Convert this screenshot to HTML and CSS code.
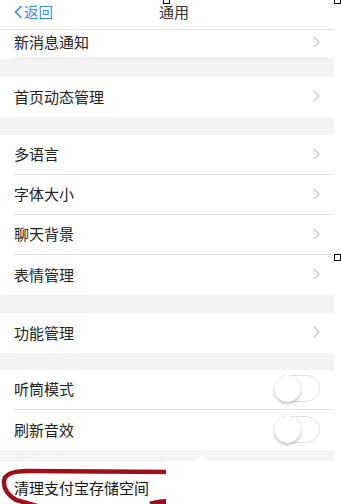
FILE: index.html
```html
<!DOCTYPE html>
<html lang="zh">
<head>
<meta charset="utf-8">
<link rel="stylesheet" href="styles.css">
</head>
<body>
<div class="page">
  <div class="screen">
    <header class="nav">
      <div class="back">
        <svg class="back-icon" width="9" height="14" viewBox="0 0 9 14"><polyline points="7.5,1 1.5,7 7.5,13" fill="none" stroke="#3b8ee0" stroke-width="1.6"/></svg>
        <span>返回</span>
      </div>
      <div class="title">通用</div>
      <div class="nav-spacer"></div>
    </header>

    <section class="group">
      <div class="row row-partial"><div class="row-inner"><span class="label">新消息通知</span><svg class="chev" width="7" height="12" viewBox="0 0 7 12"><polyline points="1,1 6,6 1,11" fill="none" stroke="#c7c7cc" stroke-width="1.2"/></svg></div></div>
    </section>

    <section class="group g2">
      <div class="row"><div class="row-inner"><span class="label">首页动态管理</span><svg class="chev" width="7" height="12" viewBox="0 0 7 12"><polyline points="1,1 6,6 1,11" fill="none" stroke="#c7c7cc" stroke-width="1.2"/></svg></div></div>
    </section>

    <section class="group g3">
      <div class="row"><div class="row-inner"><span class="label">多语言</span><svg class="chev" width="7" height="12" viewBox="0 0 7 12"><polyline points="1,1 6,6 1,11" fill="none" stroke="#c7c7cc" stroke-width="1.2"/></svg></div></div>
      <div class="row"><div class="row-inner"><span class="label">字体大小</span><svg class="chev" width="7" height="12" viewBox="0 0 7 12"><polyline points="1,1 6,6 1,11" fill="none" stroke="#c7c7cc" stroke-width="1.2"/></svg></div></div>
      <div class="row"><div class="row-inner"><span class="label">聊天背景</span><svg class="chev" width="7" height="12" viewBox="0 0 7 12"><polyline points="1,1 6,6 1,11" fill="none" stroke="#c7c7cc" stroke-width="1.2"/></svg></div></div>
      <div class="row"><div class="row-inner"><span class="label">表情管理</span><svg class="chev" width="7" height="12" viewBox="0 0 7 12"><polyline points="1,1 6,6 1,11" fill="none" stroke="#c7c7cc" stroke-width="1.2"/></svg></div></div>
    </section>

    <section class="group g4">
      <div class="row"><div class="row-inner"><span class="label">功能管理</span><svg class="chev" width="7" height="12" viewBox="0 0 7 12"><polyline points="1,1 6,6 1,11" fill="none" stroke="#c7c7cc" stroke-width="1.2"/></svg></div></div>
    </section>

    <section class="group g5">
      <div class="row"><div class="row-inner"><span class="label">听筒模式</span><span class="toggle"><span class="knob"></span></span></div></div>
      <div class="row"><div class="row-inner"><span class="label">刷新音效</span><span class="toggle"><span class="knob"></span></span></div></div>
    </section>

    <section class="group g6">
      <div class="row row-clean"><div class="row-inner"><span class="label">清理支付宝存储空间</span></div></div>
      <svg class="annot" width="180" height="44" viewBox="0 0 180 44"><path d="M172 10 L28 9 Q5 9 4 19 Q3 30 16 38 L44 46" fill="none" stroke="#9e0f1a" stroke-width="4.5" stroke-linecap="round"/><path d="M150 42 Q165 38 178 40" fill="none" stroke="#9e0f1a" stroke-width="5"/></svg>
      <div class="popup"><span class="popup-tip"></span></div>
    </section>
  </div>
  <span class="handle h1"></span>
  <span class="handle h2"></span>
  <span class="handle h3"></span>
</div>
</body>
</html>
```

FILE: styles.css
```css
* { box-sizing: border-box; }
html, body { margin: 0; padding: 0; background: #fff; }
body {
  font-family: "Noto Sans CJK SC", "Noto Sans", sans-serif;
  width: 341px;
  height: 504px;
  overflow: hidden;
}
.page { position: relative; width: 341px; height: 504px; overflow: hidden; }
.screen {
  width: 334px;
  height: 504px;
  background: #f4f4f7;
  overflow: hidden;
}
.nav {
  height: 30px;
  background: #fff;
  border-bottom: 1px solid #e4e4e6;
  display: flex;
  align-items: center;
  padding: 0 0 6px 14px;
}
.back {
  display: flex;
  align-items: center;
  gap: 1px;
  color: #3b8ee0;
  font-size: 14.5px;
  width: 80px;
}
.back-icon { display: block; }
.title {
  flex: 1;
  text-align: center;
  font-size: 15px;
  color: #333;
  padding-right: 80px;
}
.nav-spacer { width: 0; }
.group { background: #fff; }
.g2 { margin-top: 18px; }
.g3 { margin-top: 18px; }
.g4 { margin-top: 18px; }
.g5 { margin-top: 17px; }
.g6 { margin-top: 12px; position: relative; height: 60px; }
.row { padding-left: 14px; }
.row-inner {
  height: 40px;
  display: flex;
  align-items: center;
  justify-content: space-between;
  padding-right: 14px;
  padding-bottom: 2px;
  border-bottom: 1px solid #e8e8ea;
}
.row:last-child .row-inner { border-bottom: none; }
.row-partial .row-inner { height: 29px; border-bottom: 1px solid #e6e6e8; padding-bottom: 5px; }
.row-partial:last-child .row-inner { border-bottom: 1px solid #e6e6e8; }
.label { font-size: 15px; color: #222; }
.chev { display: block; }
.toggle {
  width: 46px;
  height: 27px;
  border-radius: 14px;
  border: 1px solid #e2e2e4;
  background: #fff;
  position: relative;
  display: block;
}
.knob {
  position: absolute;
  left: -1px;
  top: -1px;
  width: 27px;
  height: 27px;
  border-radius: 50%;
  background: #fff;
  box-shadow: 0 2px 3px rgba(0,0,0,0.22), 0 0 1px rgba(0,0,0,0.2);
}
.row-clean .row-inner { height: 52px; padding-bottom: 0; }
.row-clean .label { color: #111; }
.annot { position: absolute; left: 0; top: 0; }
.popup {
  position: absolute;
  left: 166px;
  top: -1px;
  width: 168px;
  height: 60px;
  background: #fff;
}
.popup-tip {
  position: absolute;
  left: 30px;
  top: -6px;
  width: 0;
  height: 0;
  border-left: 6px solid transparent;
  border-right: 6px solid transparent;
  border-bottom: 6px solid #fff;
}
.handle {
  position: absolute;
  width: 7px;
  height: 7px;
  background: #fff;
  border: 1px solid #000;
}
.h1 { left: 163px; top: -3px; }
.h2 { left: 334px; top: -3px; }
.h3 { left: 334px; top: 254px; }
```
